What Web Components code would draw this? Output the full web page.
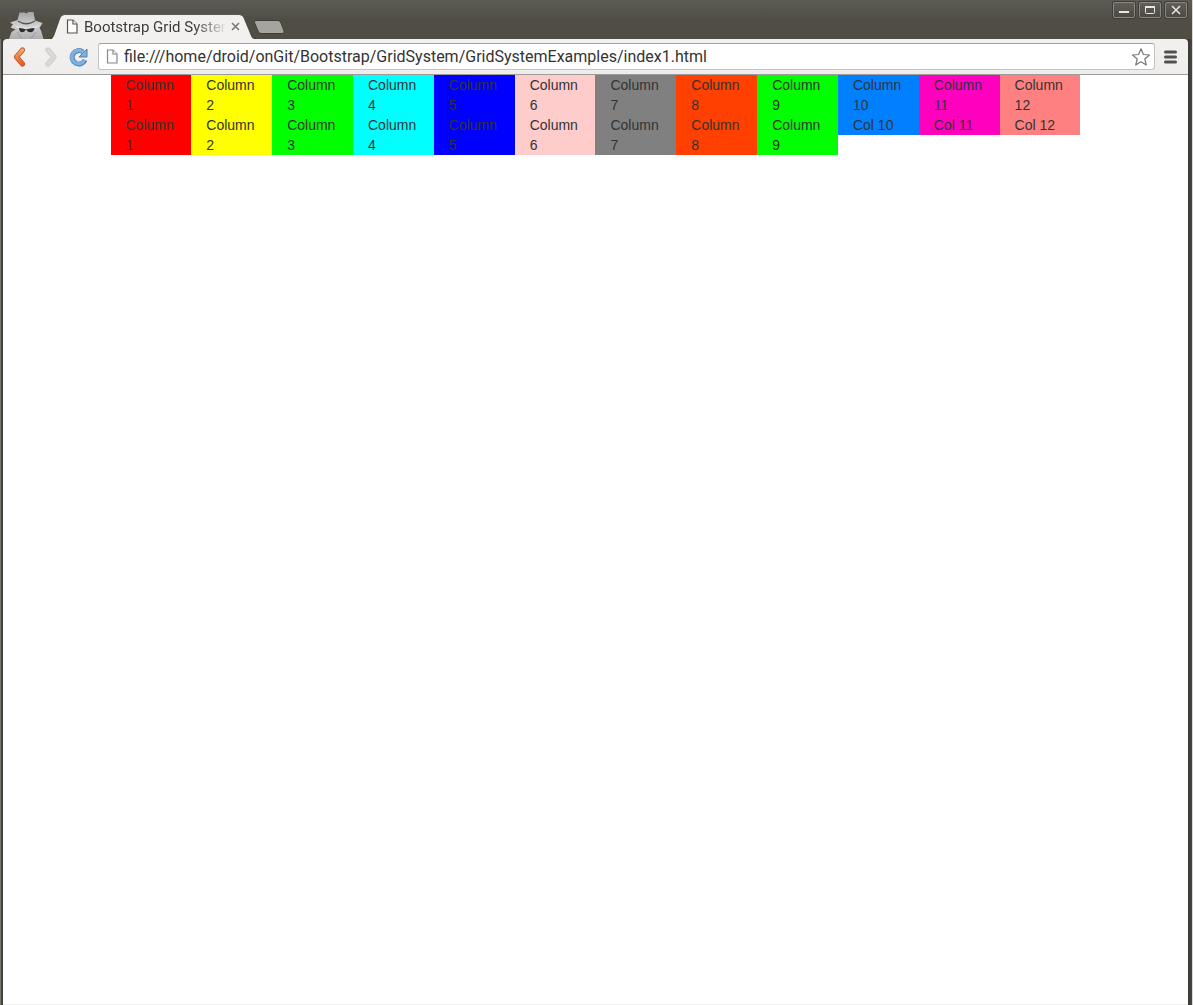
<!DOCTYPE html>
<html lang="en">
<head>
<meta charset="utf-8">
<title>Bootstrap Grid System</title>
<style>
html,body{height:100%;margin:0}
body{background:#fff;overflow:hidden}
</style>
</head>
<body>
<browser-window>
  <title-bar slot="title"><browser-tab>Bootstrap Grid System</browser-tab></title-bar>
  <nav-bar slot="nav" url="file:///home/droid/onGit/Bootstrap/GridSystem/GridSystemExamples/index1.html"></nav-bar>
  <grid-page></grid-page>
</browser-window>
<script>
const define = (name, html, setup) => customElements.define(name, class extends HTMLElement {
  connectedCallback() {
    if (this.shadowRoot) return;
    const t = document.createElement('template');
    t.innerHTML = html;
    this.attachShadow({mode: 'open'}).append(t.content.cloneNode(true));
    if (setup) setup(this, this.shadowRoot);
  }
});

define('window-button', `
<style>
:host{display:block}
button{display:grid;place-items:center;box-sizing:border-box;width:22px;height:16px;padding:0;border:1px solid #8a887f;border-radius:2px;background:linear-gradient(#615f57,#4b4942);box-shadow:0 0 0 1px #3f3d37}
svg{display:block}
</style>
<button><svg width="20" height="14" fill="none" stroke="#e8e7e3"></svg></button>`, (host, root) => {
  const kind = host.getAttribute('kind');
  root.querySelector('button').setAttribute('aria-label', kind);
  root.querySelector('svg').innerHTML = {
    minimize: '<path d="M5 9h10" stroke-width="2"/>',
    maximize: '<rect x="5.5" y="3.5" width="9" height="7" rx="1"/><path d="M5 4h10" stroke-width="2"/>',
    close: '<path d="M6 3l8 8M14 3l-8 8" stroke-width="1.5"/>'
  }[kind];
});

define('page-icon', `
<style>:host{display:block;flex:none}svg{display:block}</style>
<svg width="12" height="15" fill="#fcfcfc" stroke="currentColor"><path d="M1.5 1h5.500l4 4v9h-9.500z" stroke-width="1.200"/><path d="M7 1v4h4" stroke-width="1.200"/></svg>`);

define('browser-tab', `
<style>
:host{display:grid;grid-template-columns:100%;width:206px;height:25px;color:#3c3c3c;font:15px/24px Roboto,"Noto Sans",sans-serif}
svg.shape{grid-area:1/1;display:block}
.row{grid-area:1/1;display:flex;align-items:center;padding:0 16px}
.title{flex:1;min-width:0;overflow:hidden;white-space:nowrap;margin-left:6px;-webkit-mask-image:linear-gradient(90deg,#000 110px,transparent 144px);mask-image:linear-gradient(90deg,#000 110px,transparent 144px)}
page-icon{color:#555}
button{border:0;padding:0;background:none;width:9px;height:9px;margin:0 0 0 6px}
button svg{display:block}
</style>
<svg class="shape" width="206" height="25"><path d="M0 25C3 25 3 23 4 21L10 4Q11.500.5 15 .5H189Q192.500.5 194 4L201 21C202 24 203 25 206 25Z" fill="#f2f1f0"/><path d="M0 24.500C3 24.500 3 23 4 21L10 4Q11.500.5 15 .5H189Q192.500.5 194 4L201 21C202 24 203 24.500 206 24.500" fill="none" stroke="#24231f" stroke-opacity=".55"/></svg>
<div class="row"><page-icon></page-icon><span class="title"><slot></slot></span><button aria-label="Close tab"><svg width="9" height="9"><path d="M1 1l7 7M8 1l-7 7" stroke="#777" stroke-width="1.600"/></svg></button></div>`);

define('title-bar', `
<style>
:host{display:flex;height:39px;align-items:flex-end}
.spy{flex:none;width:36px;height:28px;margin-left:5px;display:block}
slot{display:block;flex:none;width:201px;margin-left:6px}
.new{border:0;padding:0;background:none;flex:none;margin:0 0 4px 2px;height:16px}
.new svg{display:block}
.controls{margin:2px 1px 0 auto;align-self:flex-start;display:flex;gap:4px}
</style>
<svg class="spy" viewBox="0 0 36 28" role="img" aria-label="Incognito"><defs><linearGradient id="g" x2="0" y2="1"><stop stop-color="#a4a4a4"/><stop offset=".5" stop-color="#cfcfcf"/><stop offset="1" stop-color="#adadad"/></linearGradient></defs>
<path d="M11.500 1.500h5l2 1 2-1.500h5l1.500 8.500 7.500 2.500-3 5 1.500 2.500 2.500 8.500H1l2.500-7 4-2.500-5-2 2.500-3-3-2 7.500-2.500z" fill="url(#g)"/>
<path d="M10 10q8 5.500 17 0" fill="none" stroke="#555" stroke-width="1.300"/>
<path d="M5 14q13 4 27 0l-3 3q-10 2-20 0z" fill="#dcdcdc"/>
<path d="M11 17q4 0 7 1.500 4-1.500 8.500-1.500-.5 4-4 4.300-3 0-4-2.300h-1q-1 2.300-3.500 2.300T11 17z" fill="#2b2b2b"/>
<path d="M9 21l5 6.500M28 21l-5 6.500" stroke="#999"/></svg>
<slot></slot>
<button class="new" aria-label="New tab"><svg width="32" height="16"><path d="M3 1.500H25Q27 1.500 28 4L31 12Q32 14.500 29 14.500H8Q6 14.500 5 12L1.500 3.500Q1 1.500 3 1.500z" fill="#a5a49f" stroke="#403e38"/></svg></button>
<div class="controls"><window-button kind="minimize"></window-button><window-button kind="maximize"></window-button><window-button kind="close"></window-button></div>`);

define('nav-bar', `
<style>
:host{display:flex;align-items:center;box-sizing:border-box;height:36px;background:linear-gradient(#f2f1f0,#eeedeb);border-bottom:1px solid #9d9c9a;border-radius:4px 4px 0 0;padding:0 10px 0 9px}
button{border:0;padding:0;background:none;flex:none}
svg{display:block}
.fwd{margin-left:18px}.reload{margin-left:11px}
.box{flex:1;min-width:0;display:flex;align-items:center;box-sizing:border-box;height:27px;margin:0 8px 0 9px;padding:0 3px 0 7px;background:#fff;border:1px solid #c5c4c2;border-top-color:#a2a19f;border-radius:3px}
page-icon{color:#888}
input{flex:1;min-width:0;height:24px;border:0;outline:0;padding:0;margin:0 8px 0 6px;background:none;color:#333;font:16px/24px Roboto,"Noto Sans",sans-serif}
</style>
<button aria-label="Back"><svg width="14" height="20" fill="none" stroke-linecap="round" stroke-linejoin="round"><defs><linearGradient id="o" x2="0" y2="1"><stop stop-color="#f2a766"/><stop offset="1" stop-color="#ea5f27"/></linearGradient></defs><path d="M10.500 3L4.500 10l6 7" stroke="#b9561f" stroke-width="5"/><path d="M10.500 3L4.500 10l6 7" stroke="url(#o)" stroke-width="3.500"/></svg></button>
<button class="fwd" aria-label="Forward"><svg width="14" height="20" fill="none" stroke-linecap="round" stroke-linejoin="round"><path d="M4 3l6 7-6 7" stroke="#c9c8c6" stroke-width="5"/><path d="M4 3l6 7-6 7" stroke="#dad9d7" stroke-width="3.500"/></svg></button>
<button class="reload" aria-label="Reload"><svg width="20" height="20"><path d="M16 13A6.700 6.700 0 1 1 14 5" fill="none" stroke="#4a82bd" stroke-width="5"/><path d="M18 2v8h-8z" fill="#7fb0e0" stroke="#4a82bd" stroke-linejoin="round"/><path d="M15.500 13A6.700 6.700 0 1 1 14.500 5.500" fill="none" stroke="#7fb0e0" stroke-width="3.500"/></svg></button>
<div class="box"><page-icon></page-icon><input aria-label="Address" spellcheck="false">
<button aria-label="Bookmark"><svg width="20" height="20"><path d="M10 1.800l2.400 5.700 6.100.5-4.700 4 1.500 6-5.300-3.200L4.700 18l1.500-6-4.700-4 6.100-.5z" fill="#fff" stroke="#777" stroke-width="1.200" stroke-linejoin="round"/></svg></button></div>
<button aria-label="Menu"><svg width="15" height="14"><path d="M2.500 2h10M2.500 7h10M2.500 12h10" stroke="#505050" stroke-width="3" stroke-linecap="round"/></svg></button>`, (host, root) => {
  root.querySelector('input').value = host.getAttribute('url');
});

define('grid-col', `
<style>:host{display:block;flex:0 0 calc(100% / 12);box-sizing:border-box;padding:0 15px}</style><slot></slot>`);

define('grid-page', `
<style>
:host{display:block;background:#fff;color:#333;font:14px/20px "Liberation Sans",Arial,sans-serif}
main{max-width:970px;margin:0 auto}
.row{display:flex;align-items:flex-start}
</style><main></main>`, (host, root) => {
  const colors = ['#f00','#ff0','#0f0','#0ff','#00f','#fcc','#808080','#ff4000','#0f0','#0080ff','#ff00bf','#ff8080'];
  for (let r = 0; r < 2; r++) {
    const row = document.createElement('div');
    row.className = 'row';
    colors.forEach((c, i) => {
      const col = document.createElement('grid-col');
      col.style.background = c;
      col.textContent = (r && i > 8 ? 'Col ' : 'Column ') + (i + 1);
      row.append(col);
    });
    root.querySelector('main').append(row);
  }
});

define('browser-window', `
<style>
:host{display:flex;flex-direction:column;box-sizing:border-box;height:100%;border-right:1px solid #d8d8d8;padding:0 4px 0 3px;
background:linear-gradient(#5c5b54,#504d45 20px,#504d45 39px,transparent 39px),linear-gradient(90deg,#77766f 1px,#4a4943 1px,#3c3b37 3px,#3c3b37 calc(100% - 3px),#484740)}
.view{flex:1;min-height:0;background:#fff;border-bottom:1px solid #eee}
</style>
<slot name="title"></slot><slot name="nav"></slot><div class="view"><slot></slot></div>`);
</script>
</body>
</html>
